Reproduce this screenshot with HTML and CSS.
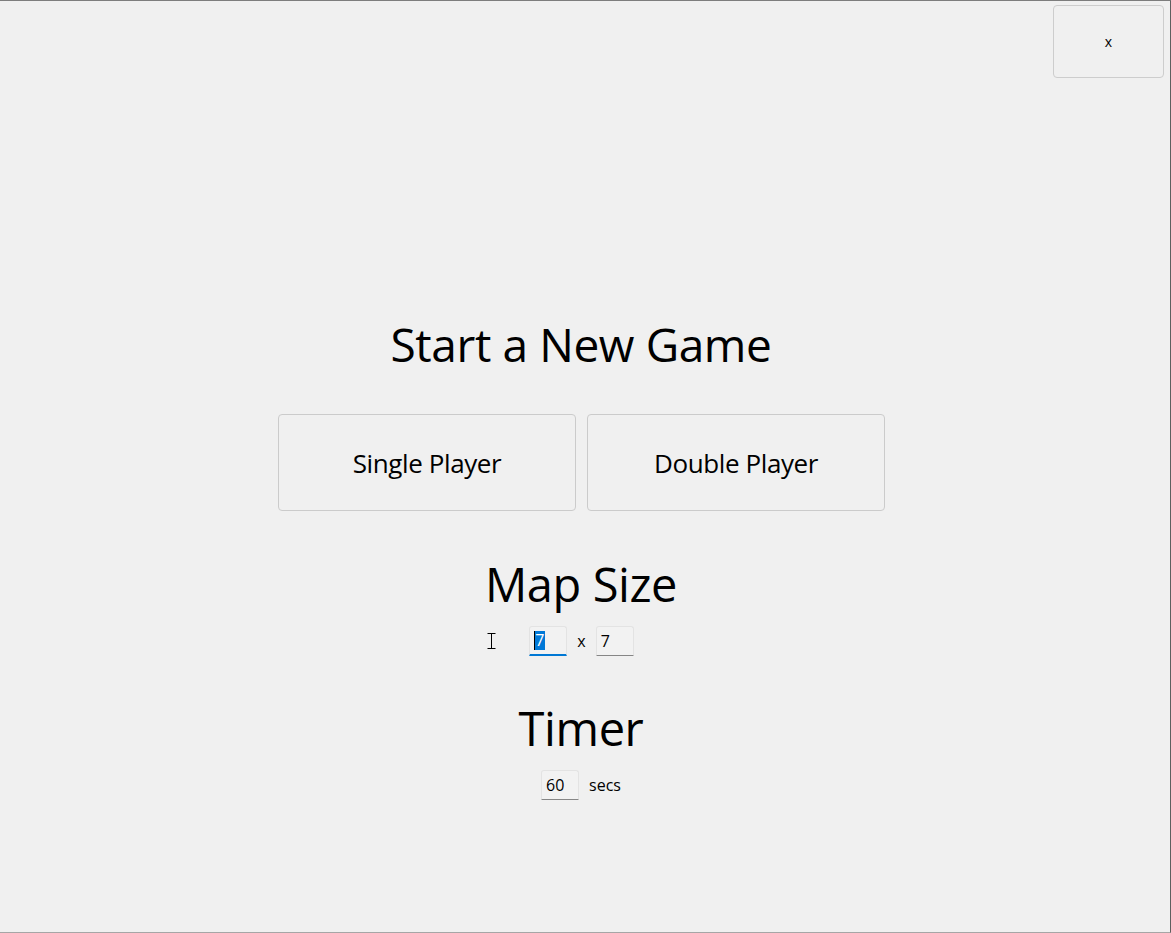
FILE: index.html
```html
<!DOCTYPE html>
<html>
<head>
<meta charset="utf-8">
<title>Start a New Game</title>
<link rel="stylesheet" href="styles.css">
</head>
<body>
<div class="window">
  <div class="topbar">
    <button class="close-btn">x</button>
  </div>
  <main class="content">
    <h1 class="title">Start a New Game</h1>
    <div class="mode-row">
      <button class="mode-btn">Single Player</button>
      <button class="mode-btn">Double Player</button>
    </div>
    <h2 class="section-title">Map Size</h2>
    <div class="field-row map-row">
      <span class="ibeam" aria-hidden="true">
        <svg width="9" height="16" viewBox="0 0 9 16"><path d="M0.5 0.5h8M4.5 0.5v15M0.5 15.5h8" stroke="#000" stroke-width="1" fill="none"/></svg>
      </span>
      <span class="num-input focused"><span class="caret"></span><span class="sel">7</span></span>
      <span class="sep">x</span>
      <span class="num-input">7</span>
    </div>
    <h2 class="section-title timer-title">Timer</h2>
    <div class="field-row">
      <span class="num-input">60</span>
      <span class="unit">secs</span>
    </div>
  </main>
</div>
</body>
</html>
```
FILE: styles.css
```css
html, body {
  margin: 0;
  padding: 0;
  background: #f0f0f0;
}
body {
  font-family: "Open Sans", "Noto Sans", sans-serif;
  color: #000;
}
.window {
  width: 1171px;
  height: 933px;
  box-sizing: border-box;
  border-top: 1px solid #7d7d7d;
  border-right: 1px solid #5f5f5f;
  border-bottom: 1px solid #a6a6a6;
  background: #f0f0f0;
}
.topbar {
  display: flex;
  justify-content: flex-end;
  padding: 4px 6px 0 0;
}
.close-btn {
  width: 111px;
  height: 73px;
  box-sizing: border-box;
  border: 1px solid #cdcdcd;
  border-radius: 4px;
  background: #f0f0f0;
  font-family: "Open Sans", sans-serif;
  font-size: 14px;
  color: #000;
  padding: 0;
}
.content {
  display: flex;
  flex-direction: column;
  align-items: center;
  padding-top: 236px;
  padding-right: 8px;
}
.title {
  margin: 0;
  font-weight: 400;
  font-size: 46px;
  line-height: 60px;
  letter-spacing: -0.4px;
}
.mode-row {
  display: flex;
  gap: 11px;
  margin-top: 40px;
  margin-left: 1px;
}
.mode-btn {
  width: 298px;
  height: 97px;
  box-sizing: border-box;
  border: 1px solid #cbcbcb;
  border-radius: 4px;
  background: #f0f0f0;
  font-family: "Open Sans", sans-serif;
  font-size: 26px;
  color: #000;
  padding: 0;
  letter-spacing: -0.4px;
}
.section-title {
  margin: 46px 0 0 0;
  font-weight: 400;
  font-size: 47px;
  line-height: 54px;
  letter-spacing: -0.4px;
}
.timer-title {
  margin-top: 45px;
}
.field-row {
  display: flex;
  align-items: center;
  gap: 10px;
  margin-top: 15px;
  font-size: 16px;
}
.map-row {
  position: relative;
  margin-left: 1px;
}
.ibeam {
  position: absolute;
  left: -42px;
  top: 7px;
  line-height: 0;
}
.num-input {
  display: inline-flex;
  align-items: center;
  width: 38px;
  height: 30px;
  box-sizing: border-box;
  padding-left: 4px;
  border: 1px solid #e3e3e3;
  border-bottom: 1px solid #868686;
  border-radius: 3px 3px 0 0;
  background: #f2f2f2;
  font-size: 16px;
  line-height: 20px;
}
.num-input.focused {
  border-bottom: 2px solid #0078d4;
  padding-left: 4px;
}
.caret {
  display: inline-block;
  width: 1px;
  height: 19px;
  background: #000;
}
.sel {
  display: inline-block;
  background: #0078d7;
  color: #fff;
  height: 19px;
  line-height: 19px;
  padding-right: 1px;
}
.sep, .unit {
  font-size: 16px;
}
```
